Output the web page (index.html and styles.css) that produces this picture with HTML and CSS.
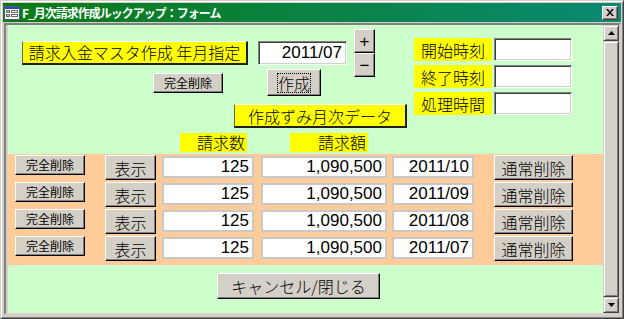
FILE: index.html
```html
<!DOCTYPE html>
<html lang="ja">
<head>
    <meta charset="UTF-8">
    <title>F_月次請求作成ルックアップ</title>
    <link rel="stylesheet" href="styles.css">
</head>
<body>
<div class="window">
    <div class="titlebar">
        <svg class="app-icon" width="16" height="14" viewBox="0 0 16 14">
            <rect x="0.5" y="0.5" width="15" height="13" fill="#fff" stroke="#4a5a8a"/>
            <rect x="1" y="1" width="14" height="2" fill="#2a4ab8"/>
            <rect x="2.5" y="4.5" width="3" height="2" fill="#c8c8c8" stroke="#6a6a6a"/>
            <rect x="7.5" y="4.5" width="6" height="2" fill="#fff" stroke="#6a6a6a"/>
            <rect x="2.5" y="8.5" width="3" height="2" fill="#c8c8c8" stroke="#6a6a6a"/>
            <rect x="7.5" y="8.5" width="6" height="2" fill="#fff" stroke="#6a6a6a"/>
        </svg>
        <span class="title">F_月次請求作成ルックアップ：フォーム</span>
        <span class="close">
            <svg width="8" height="7" viewBox="0 0 8 7">
                <path d="M0 0h2l2 2.5 2-2.5h2l-3 3.5 3 3.5h-2l-2-2.5-2 2.5h-2l3-3.5z" fill="#000"/>
            </svg>
        </span>
    </div>
    <div class="client">
        <div class="form">
            <div class="setup">
                <div class="left">
                    <div class="top-row">
                        <div class="col-a">
                            <div class="label raised master">請求入金マスタ作成 年月指定</div>
                            <button class="btn small del-top">完全削除</button>
                        </div>
                        <div class="col-b">
                            <div class="field sunken month">2011/07</div>
                            <button class="btn make"><span class="focus">作成</span></button>
                        </div>
                        <div class="spin">
                            <button class="btn spin-btn">+</button>
                            <button class="btn spin-btn">−</button>
                        </div>
                    </div>
                    <div class="made-row">
                        <div class="label raised made">作成ずみ月次データ</div>
                    </div>
                </div>
                <div class="times">
                    <div class="label flat">開始時刻</div><div class="field sunken"></div>
                    <div class="label flat">終了時刻</div><div class="field sunken"></div>
                    <div class="label flat">処理時間</div><div class="field sunken"></div>
                </div>
            </div>

            <div class="heads">
                <div class="head count">請求数</div>
                <div class="head amount">請求額</div>
            </div>

            <div class="list">
                <div class="row">
                    <button class="btn small del-all">完全削除</button>
                    <button class="btn show">表示</button>
                    <div class="field box qty">125</div>
                    <div class="field box sum">1,090,500</div>
                    <div class="field box ym">2011/10</div>
                    <button class="btn del">通常削除</button>
                </div>
                <div class="row">
                    <button class="btn small del-all">完全削除</button>
                    <button class="btn show">表示</button>
                    <div class="field box qty">125</div>
                    <div class="field box sum">1,090,500</div>
                    <div class="field box ym">2011/09</div>
                    <button class="btn del">通常削除</button>
                </div>
                <div class="row">
                    <button class="btn small del-all">完全削除</button>
                    <button class="btn show">表示</button>
                    <div class="field box qty">125</div>
                    <div class="field box sum">1,090,500</div>
                    <div class="field box ym">2011/08</div>
                    <button class="btn del">通常削除</button>
                </div>
                <div class="row">
                    <button class="btn small del-all">完全削除</button>
                    <button class="btn show">表示</button>
                    <div class="field box qty">125</div>
                    <div class="field box sum">1,090,500</div>
                    <div class="field box ym">2011/07</div>
                    <button class="btn del">通常削除</button>
                </div>
            </div>

            <div class="footer">
                <button class="btn cancel">キャンセル/閉じる</button>
            </div>
        </div>
        <!-- スクロールバー -->
        <div class="scrollbar">
            <div class="arrow up">
                <svg width="7" height="4" viewBox="0 0 7 4"><path d="M3.5 0L7 4H0z" fill="#000"/></svg>
            </div>
            <div class="thumb"></div>
            <div class="arrow down">
                <svg width="7" height="4" viewBox="0 0 7 4"><path d="M0 0h7L3.5 4z" fill="#000"/></svg>
            </div>
        </div>
    </div>
</div>
</body>
</html>
```

FILE: styles.css
```css
* {
    box-sizing: border-box;
}
body {
    margin: 0;
    background-color: #d4d0c8;
    font-family: "Liberation Sans", "Noto Sans CJK JP", sans-serif;
}
.window {
    width: 624px; height: 319px;
    display: flex; flex-direction: column;
    background-color: #d4d0c8;
    border: 1px solid;
    border-color: #d4d0c8 #404040 #404040 #d4d0c8;
    box-shadow: inset 1px 1px #fff, inset -1px -1px #808080;
    padding: 2px 2px 3px 2px;
}
/* title bar */
.titlebar {
    height: 19px;
    display: flex; align-items: center;
    padding: 0 3px 0 1px;
    background: linear-gradient(to right, #0a7a14, #0a8a72);
    color: #fff;
}
.app-icon {
    margin-right: 2px;
}
.title {
    flex: 1;
    font-family: "Noto Sans CJK JP", sans-serif;
    font-size: 12px; font-weight: bold;
    letter-spacing: -1px;
    line-height: 19px;
}
.close {
    width: 16px; height: 14px;
    display: flex; align-items: center; justify-content: center;
    background-color: #d4d0c8;
    border: 1px solid;
    border-color: #fff #404040 #404040 #fff;
    box-shadow: inset -1px -1px #808080;
}
/* client */
.client {
    flex: 1;
    display: flex;
    margin: 1px 0 0 1px;
    border: 2px solid;
    border-color: #808080 #d4d0c8 #d4d0c8 #808080;
    padding-left: 2px;
}
.form {
    flex: 1;
    background-color: #ccffcc;
}
.scrollbar {
    width: 16px;
    display: flex; flex-direction: column;
}
.arrow, .thumb {
    background-color: #d4d0c8;
    border: 1px solid;
    border-color: #d4d0c8 #404040 #404040 #d4d0c8;
    box-shadow: inset 1px 1px #fff, inset -1px -1px #808080;
}
.arrow {
    height: 16px;
    display: flex; align-items: center; justify-content: center;
}
.thumb {
    flex: 1;
}
/* common controls */
.btn {
    font-family: "Noto Sans CJK JP", sans-serif;
    font-size: 16px; font-weight: 300; color: #000;
    line-height: 1;
    padding: 0; margin: 0;
    background-color: #d4d0c8;
    border: 1px solid;
    border-color: #fff #000 #000 #fff;
    box-shadow: inset -1px -1px #808080;
    display: flex; align-items: center; justify-content: center;
}
.btn.small {
    font-size: 12px; font-weight: 400;
    width: 70px; height: 20px;
}
.label {
    font-family: "Noto Sans CJK JP", sans-serif;
    font-size: 16px; font-weight: 300;
    background-color: #ffff00;
    display: flex; align-items: center; justify-content: center;
}
.label.raised {
    border-style: solid;
    border-width: 1px 2px 2px 1px;
    border-color: #fff #202020 #202020 #606060;
}
.field {
    font-size: 17px;
    background-color: #fff;
    display: flex; align-items: center; justify-content: flex-end;
    padding-right: 3px;
}
.field.sunken {
    border: 1px solid;
    border-color: #808080 #fff #fff #808080;
    box-shadow: inset 1px 1px #404040, inset -1px -1px #d4d0c8;
}
.field.box {
    height: 22px;
    margin-top: 1px;
    border: 2px solid #c8c8c8;
}
/* top area */
.setup {
    display: flex;
    height: 103px;
}
.left {
    width: 399px;
}
.top-row {
    display: flex; align-items: flex-start;
    height: 79px;
}
.col-a {
    margin-left: 14px;
    width: 226px;
}
.master {
    margin-top: 16px;
    height: 24px;
    padding-bottom: 1px;
}
.del-top {
    margin: 8px 0 0 131px;
}
.col-b {
    margin-left: 10px;
    width: 89px;
}
.month {
    margin-top: 16px;
    height: 24px;
    padding-right: 4px;
}
.make {
    margin: 4px 0 0 9px;
    width: 54px; height: 27px;
}
.focus {
    border: 1px dotted #000;
    padding: 1px 0;
}
.spin {
    margin: 4px 0 0 7px;
}
.spin-btn {
    width: 21px; height: 24px;
    font-family: "Liberation Sans", sans-serif;
    font-size: 17px;
}
.made-row {
    padding-left: 226px;
}
.made {
    width: 173px; height: 24px;
}
.times {
    margin: 13px 0 0 7px;
    display: grid;
    grid-template-columns: 78px 78px;
    grid-auto-rows: 23px;
    column-gap: 2px; row-gap: 4px;
    align-self: flex-start;
}
/* headings */
.heads {
    display: flex;
    height: 26px;
    padding-top: 5px;
}
.head {
    height: 19px;
    font-family: "Noto Sans CJK JP", sans-serif;
    font-size: 16px; font-weight: 300; line-height: 19px;
    text-align: right;
    background-color: #ffff00;
    padding-right: 2px;
}
.count {
    margin-left: 172px;
    width: 67px;
}
.amount {
    margin-left: 43px;
    width: 78px;
}
/* list */
.list {
    background-color: #ffcc99;
    padding: 1px 0 2px;
}
.row {
    display: flex; align-items: flex-start;
    height: 27px;
}
.del-all {
    margin-left: 7px;
    width: 71px;
}
.show {
    margin-left: 20px;
    width: 51px; height: 25px;
}
.qty {
    margin-left: 6px;
    width: 92px;
}
.sum {
    margin-left: 7px;
    width: 126px;
}
.ym {
    margin-left: 5px;
    width: 82px;
}
.del {
    margin-left: 20px;
    width: 79px; height: 25px;
}
.footer {
    padding: 8px 0 0 209px;
}
.cancel {
    width: 163px; height: 26px;
}
```
